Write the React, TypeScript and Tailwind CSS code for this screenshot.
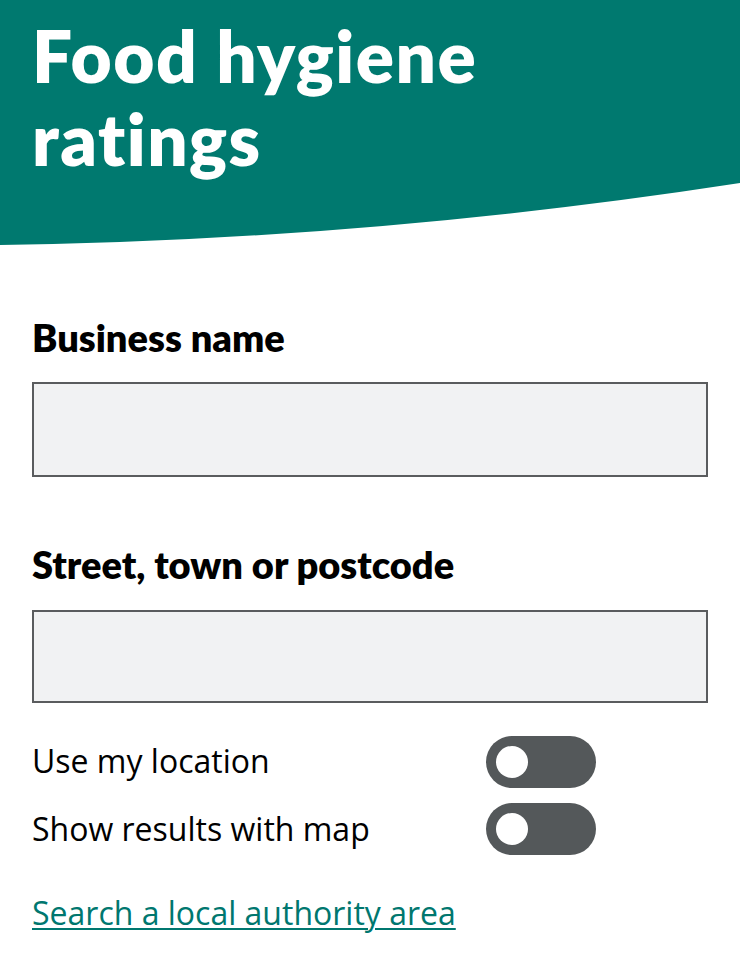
import React, { useState } from "react";

const headingFont = { fontFamily: "Lato, 'Open Sans', sans-serif" };

function Toggle({ label, lift }: { label: string; lift: string }) {
  const [on, setOn] = useState(false);
  return (
    <label className="flex h-[52px] items-center">
      <span className={`w-[454px] text-[32px] leading-[44px] text-black ${lift}`}>{label}</span>
      <button
        type="button"
        role="switch"
        aria-checked={on}
        onClick={() => setOn(!on)}
        className={`flex h-[52px] w-[110px] items-center rounded-full px-[10px] ${
          on ? "justify-end bg-[#00796f]" : "justify-start bg-[#54585a]"
        }`}
      >
        <span className="block h-[32px] w-[32px] rounded-full bg-white" />
      </button>
    </label>
  );
}

export default function App() {
  return (
    <div className="min-h-[966px] bg-white" style={{ fontFamily: "'Open Sans', sans-serif" }}>
      <header className="h-[183px] bg-[#00796f] px-8 pt-[14px]">
        <h1
          className="text-[71px] font-extrabold leading-[83px] tracking-[1.5px] text-white"
          style={headingFont}
        >
          Food hygiene
          <br />
          ratings
        </h1>
      </header>
      {/* curved lower edge of the banner */}
      <svg className="block" width="740" height="62" viewBox="0 0 740 62" preserveAspectRatio="none">
        <path d="M0 0 H740 Q370 57 0 62 Z" fill="#00796f" />
      </svg>

      <main className="px-8 pt-[68px]">
        <label className="block">
          <span className="mb-[21px] block text-[38px] font-extrabold leading-[48px] text-black" style={headingFont}>
            Business name
          </span>
          <input
            type="text"
            className="block h-[95px] w-full border-2 border-[#5a5c5e] bg-[#f1f2f3] px-4 text-[28px] outline-none"
          />
        </label>

        <label className="mt-[63px] block">
          <span className="mb-[22px] block text-[38px] font-extrabold leading-[48px] text-black" style={headingFont}>
            Street, town or postcode
          </span>
          <input
            type="text"
            className="block h-[93px] w-full border-2 border-[#5a5c5e] bg-[#f1f2f3] px-4 text-[28px] outline-none"
          />
        </label>

        <div className="mt-[33px] flex flex-col gap-[15px]">
          <Toggle label="Use my location" lift="mb-[2px]" />
          <Toggle label="Show results with map" lift="mb-0" />
        </div>

        <a
          href="#"
          className="mt-[36px] inline-block text-[32px] leading-[44px] text-[#00776f] underline decoration-[2px] underline-offset-[3px]"
        >
          Search a local authority area
        </a>
      </main>
    </div>
  );
}
